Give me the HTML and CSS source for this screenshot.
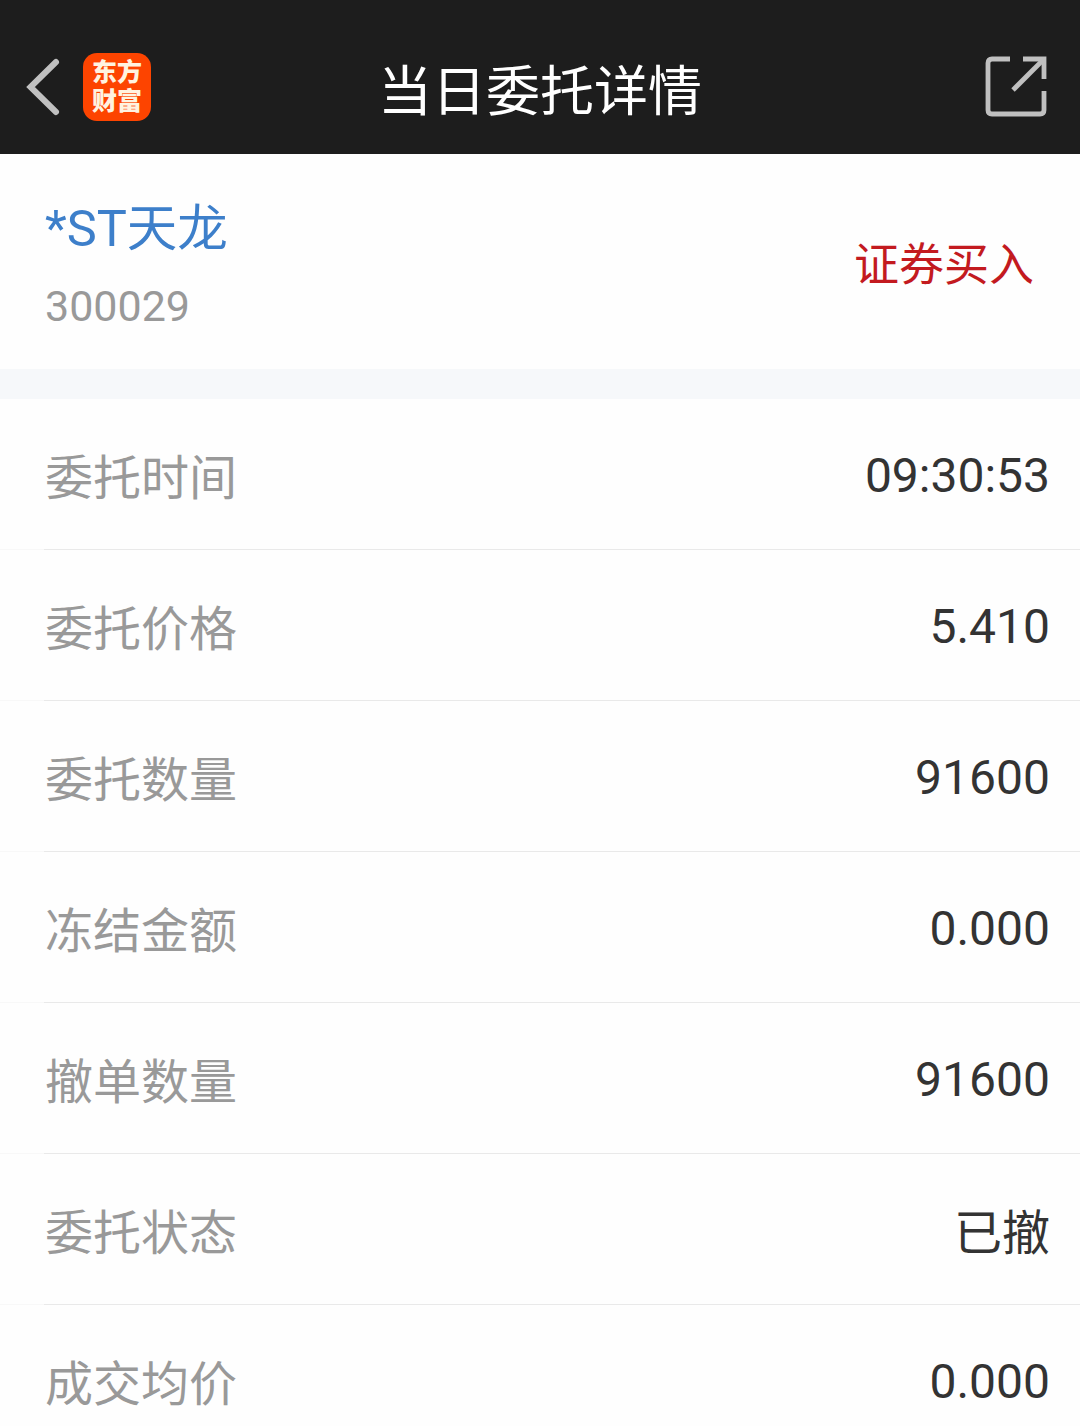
FILE: index.html
```
<!DOCTYPE html>
<html lang="zh-CN">

<head>
    <meta charset="UTF-8">
    <meta name="viewport" content="width=device-width, initial-scale=1.0">
    <title>当日委托详情</title>
    <link rel="stylesheet" href="styles.css">
</head>

<body>
    <!-- top bar -->
    <header class="topbar">
        <div class="nav">
            <svg class="back" width="36" height="60" viewBox="0 0 36 60">
                <path d="M31 5 L5.500 30 L31 55" fill="none" stroke="#c0c0c0" stroke-width="6" stroke-linecap="round" />
            </svg>
            <div class="logo">
                <span>东方</span>
                <span>财富</span>
            </div>
        </div>
        <h1>当日委托详情</h1>
        <svg class="share" width="62" height="62" viewBox="0 0 62 62">
            <g fill="none" stroke="#c0c0c0" stroke-width="4.8">
                <path d="M25 3 H7 Q3 3 3 7 V54 Q3 58 7 58 H55 Q59 58 59 54 V35" />
                <path d="M38 3 H59 V23" />
                <path d="M58 4 L28 34" />
            </g>
        </svg>
    </header>

    <!-- stock name and direction -->
    <section class="stock">
        <div>
            <p class="name">*ST天龙</p>
            <p class="code">300029</p>
        </div>
        <span class="direction">证券买入</span>
    </section>

    <!-- order details -->
    <ul class="details">
        <li><span class="label">委托时间</span><span class="value">09:30:53</span></li>
        <li><span class="label">委托价格</span><span class="value">5.410</span></li>
        <li><span class="label">委托数量</span><span class="value">91600</span></li>
        <li><span class="label">冻结金额</span><span class="value">0.000</span></li>
        <li><span class="label">撤单数量</span><span class="value">91600</span></li>
        <li><span class="label">委托状态</span><span class="value text">已撤</span></li>
        <li><span class="label">成交均价</span><span class="value">0.000</span></li>
    </ul>
</body>

</html>
```
FILE: styles.css
```
body {
    margin: 0;
    height: 1426px;
    overflow: hidden;
    background-color: #fefefe;
    font-family: Roboto, "Noto Sans CJK SC", sans-serif;
}

h1, p, ul {
    margin: 0;
    padding: 0;
    font-weight: 400;
}

.topbar {
    display: grid;
    grid-template-columns: 1fr auto 1fr;
    align-items: center;
    box-sizing: border-box;
    height: 154px;
    padding: 19px 25px 0;
    background-color: #1d1d1d;
}

.nav {
    display: flex;
    align-items: center;
    gap: 22px;
}

.logo {
    display: flex;
    flex-direction: column;
    align-items: center;
    justify-content: center;
    width: 68px;
    height: 68px;
    border-radius: 14px;
    background-color: #fd4400;
    color: #fff3e0;
    font-size: 25px;
    font-weight: 900;
    line-height: 29px;
}

.topbar h1 {
    padding-top: 13px;
    color: #ffffff;
    font-size: 54px;
    line-height: 60px;
}

.share {
    justify-self: end;
    margin-right: 8px;
}

.stock {
    display: flex;
    justify-content: space-between;
    align-items: center;
    box-sizing: border-box;
    height: 245px;
    padding: 0 46px 0 45px;
    border-bottom: 30px solid #f6f8fa;
}

.name {
    padding-top: 6px;
    color: #3d7fca;
    font-size: 50.5px;
    line-height: 70px;
}

.code {
    margin-top: 12px;
    color: #999999;
    font-size: 43px;
    line-height: 60px;
}

.direction {
    color: #c31a1f;
    font-size: 45px;
}

.details {
    list-style: none;
}

.details li {
    display: flex;
    justify-content: space-between;
    align-items: center;
    box-sizing: border-box;
    height: 151px;
    padding: 0 30px 1px 45px;
    /* the divider is fainter under the left indent */
    background: linear-gradient(to right, #f8f8f8 44px, #e9e9e9 44px) bottom / 100% 1px no-repeat;
    font-size: 48px;
}

.label {
    padding-bottom: 1px;
    color: #999999;
}

.value {
    padding-top: 2px;
    color: #333333;
}

.value.text {
    padding-top: 0;
}
```
